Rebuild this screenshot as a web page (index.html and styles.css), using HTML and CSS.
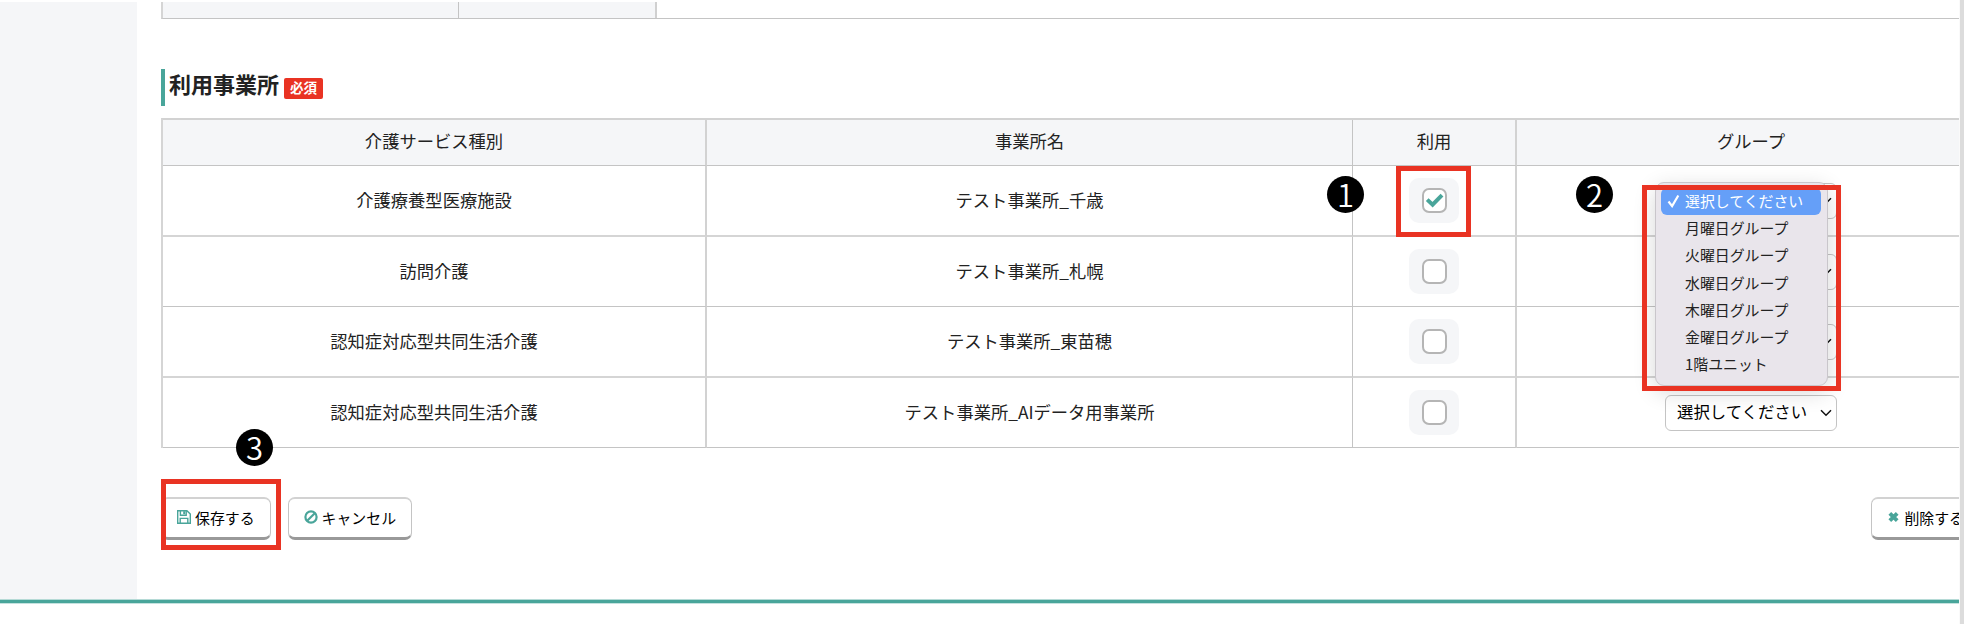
FILE: index.html
```html
<!DOCTYPE html>
<html lang="ja">
<head>
    <meta charset="UTF-8">
    <meta name="viewport" content="width=device-width, initial-scale=1.0">
    <title>利用事業所</title>
    <link rel="stylesheet" href="styles.css">
</head>
<body>

    <div class="page">
        <div class="layout">
            <div class="sidebar"></div>
            <div class="content">
                <div class="prev-table">
                    <div class="prev-head"></div>
                    <div class="prev-sub"></div>
                </div>

                <h2 class="title">利用事業所<span class="required">必須</span></h2>

                <table class="office-table">
                    <thead>
                        <tr>
                            <th class="col-type">介護サービス種別</th>
                            <th class="col-name">事業所名</th>
                            <th class="col-use">利用</th>
                            <th class="col-group">グループ</th>
                        </tr>
                    </thead>
                    <tbody>
                        <tr class="tall">
                            <td class="text">介護療養型医療施設</td>
                            <td class="text">テスト事業所_千歳</td>
                            <td>
                                <label class="check"><span class="box"><svg width="19" height="15" viewBox="0 0 19 15"><path d="M2.2 6.6l5.4 5L17 2.2" fill="none" stroke="#49a59a" stroke-width="4"/></svg></span></label>
                            </td>
                            <td>
                                <div class="select"><svg class="arrow" width="12" height="8" viewBox="0 0 12 8"><path d="M1 1.2l5 5 5-5"/></svg>
                                    <ul class="menu">
                                        <li class="active"><svg class="tick" width="13" height="14" viewBox="0 0 13 14"><path d="M1.5 7.5l3.6 4.6L11.3 1.5"/></svg>選択してください</li>
                                        <li>月曜日グループ</li>
                                        <li>火曜日グループ</li>
                                        <li>水曜日グループ</li>
                                        <li>木曜日グループ</li>
                                        <li>金曜日グループ</li>
                                        <li>1階ユニット</li>
                                    </ul>
                                </div>
                            </td>
                        </tr>
                        <tr>
                            <td class="text">訪問介護</td>
                            <td class="text">テスト事業所_札幌</td>
                            <td><label class="check"><span class="box"></span></label></td>
                            <td><div class="select"><svg class="arrow" width="12" height="8" viewBox="0 0 12 8"><path d="M1 1.2l5 5 5-5"/></svg></div></td>
                        </tr>
                        <tr class="tall">
                            <td class="text">認知症対応型共同生活介護</td>
                            <td class="text">テスト事業所_東苗穂</td>
                            <td><label class="check"><span class="box"></span></label></td>
                            <td><div class="select"><svg class="arrow" width="12" height="8" viewBox="0 0 12 8"><path d="M1 1.2l5 5 5-5"/></svg></div></td>
                        </tr>
                        <tr>
                            <td class="text">認知症対応型共同生活介護</td>
                            <td class="text">テスト事業所_AIデータ用事業所</td>
                            <td><label class="check"><span class="box"></span></label></td>
                            <td><div class="select">選択してください<svg class="arrow" width="12" height="8" viewBox="0 0 12 8"><path d="M1 1.2l5 5 5-5"/></svg></div></td>
                        </tr>
                    </tbody>
                </table>

                <div class="buttons">
                    <button class="btn">
                        <svg width="14" height="14" viewBox="0 0 14 14" fill="none" stroke="#49a59a" stroke-width="1.4"><path d="M.7.7h9.2l3.4 3.4v9.2H.7z"/><path d="M3.2 13V8.4h7.6V13"/><path d="M3.4.8v4.4h5.8V.8"/><path d="M7.2 1.2v3" stroke-width="2"/></svg>
                        保存する
                    </button>
                    <button class="btn">
                        <svg width="14" height="14" viewBox="0 0 14 14" fill="none" stroke="#49a59a" stroke-width="2.2"><circle cx="7" cy="7" r="5.6"/><path d="M3.2 10.8l7.6-7.6"/></svg>
                        キャンセル
                    </button>
                    <button class="btn btn-delete">
                        <svg width="11" height="12" viewBox="0 0 11 12"><path d="M1.8 2.3l7.4 7.4M9.2 2.3L1.8 9.7" stroke="#49a59a" stroke-width="3.8"/></svg>
                        削除する
                    </button>
                </div>
            </div>
        </div>
        <div class="footer-line"></div>
    </div>
    <div class="window-edge"></div>

    <!-- step markers -->
    <div class="frame frame-1"></div>
    <div class="frame frame-2"></div>
    <div class="frame frame-3"></div>
    <span class="step step-1">1</span>
    <span class="step step-2">2</span>
    <span class="step step-3">3</span>

</body>
</html>
```
FILE: styles.css
```css
* { margin: 0; padding: 0; box-sizing: border-box; }
body {
    position: relative;
    display: flex;
    width: 1964px;
    height: 624px;
    overflow: hidden;
    background-color: #fff;
    color: #222;
    font-family: 'Noto Sans CJK JP', sans-serif;
    font-size: 17.3px;
}
.page {
    width: 1959px;
    padding-top: 2px;
    overflow: hidden;
}
.layout { display: flex; height: 597px; }
.sidebar {
    flex: none;
    width: 137px;
    background-color: #f5f6f8;
}
.content { flex: none; width: 1849px; padding-left: 24px; }

/* bottom of the table above */
.prev-table {
    display: flex;
    height: 17px;
    border-left: 2px solid #d5d5d5;
    border-bottom: 1px solid #c4c4c4;
}
.prev-head { width: 296px; background-color: #f5f6f8; border-right: 1px solid #c4c4c4; }
.prev-sub { width: 198px; background-color: #f5f6f8; border-right: 2px solid #d0d0d0; }

.title {
    display: flex;
    align-items: flex-start;
    height: 37px;
    margin-top: 50px;
    padding: 0 0 0 4px;
    border-left: 4px solid #49a59a;
    font-size: 22px;
    line-height: 28px;
}
.required {
    height: 21px;
    margin: 9px 0 0 5px;
    padding: 0 6px;
    border-radius: 2px;
    background-color: #e93323;
    color: #fff;
    font-size: 13.5px;
    line-height: 19px;
}

.office-table {
    width: 1825px;
    margin-top: 12px;
    table-layout: fixed;
    border-collapse: separate;
    border-spacing: 0;
    border-top: 2px solid #d2d2d2;
    border-left: 2px solid #d5d5d5;
    text-align: center;
    line-height: 24px;
}
th {
    height: 46px;
    padding-bottom: 4px;
    background-color: #f5f6f8;
    font-weight: normal;
}
th, td { border-right: 1px solid #c4c4c4; border-bottom: 1px solid #c4c4c4; }
td { height: 70px; }
.text { padding-bottom: 2px; }
.tall td { height: 71px; border-bottom: 2px solid #d5d5d5; }
.col-type { width: 544px; }
.col-name { width: 646px; }
.col-use { width: 164px; }
th:first-child, td:first-child, th:nth-child(3), td:nth-child(3) { border-right: 2px solid #d2d2d2; }

.check {
    display: flex;
    align-items: center;
    justify-content: center;
    width: 50px;
    height: 45px;
    margin: 0 auto;
    border-radius: 10px;
    background-color: #f5f6f8;
}
.box {
    display: flex;
    align-items: center;
    justify-content: center;
    width: 25px;
    height: 25px;
    border: 2px solid #b5b5b5;
    border-radius: 7px;
    background-color: #fff;
}
.box svg { flex: none; }
.select {
    position: relative;
    display: flex;
    align-items: center;
    width: 172px;
    height: 36px;
    margin: 0 auto;
    padding: 0 4px 3px 11px;
    border: 1px solid #c4c4c4;
    border-radius: 6px;
    background-color: #fff;
    color: #000;
    font-size: 16.4px;
}
.arrow { margin: 3px 0 0 auto; fill: none; stroke: #111; stroke-width: 1.5; }
.menu {
    position: absolute;
    left: -11px;
    top: -2px;
    z-index: 1;
    width: 173px;
    height: 204px;
    padding: 5px 6px 6px 5px;
    border: 1px solid #c9c6cb;
    border-radius: 9px;
    background-color: #e9e5eb;
    box-shadow: 0 6px 22px rgba(0, 0, 0, 0.16);
    color: #222;
    font-size: 14.9px;
    text-align: left;
    list-style: none;
}
.menu li {
    display: flex;
    align-items: center;
    height: 27.2px;
    padding-left: 24px;
}
.menu .active {
    padding-left: 6px;
    border-radius: 6px;
    background-color: #659ff8;
    color: #fff;
}
.tick { margin-right: 5px; fill: none; stroke: #fff; stroke-width: 2.2; }

.buttons { display: flex; gap: 17px; width: 1820px; margin-top: 49px; }
.btn {
    display: flex;
    align-items: center;
    gap: 4px;
    height: 43px;
    padding: 0 15px 2px;
    border: 1px solid #c4c4c4;
    border-top: 2px solid #d2d2d2;
    border-bottom: 3px solid #999;
    border-radius: 7px;
    background-color: #fff;
    color: #000;
    font-family: inherit;
    font-size: 14.9px;
}
.btn-delete { margin-left: auto; gap: 5px; padding: 0 16px 2px; }

.footer-line {
    height: 5px;
    border-top: 1px solid #b5dad6;
    border-bottom: 1px solid #c5e2df;
    background-color: #49a59a;
}
.window-edge { width: 5px; border-left: 1px solid #fafafa; background-color: #dcdcdc; }

.frame { position: absolute; z-index: 2; border: 5px solid #e93323; }
.frame-1 { left: 1396px; top: 166px; width: 75px; height: 71px; }
.frame-2 { left: 1642px; top: 185px; width: 199px; height: 206px; }
.frame-3 { left: 161px; top: 479px; width: 120px; height: 71px; }
.step {
    position: absolute;
    z-index: 2;
    width: 37px;
    height: 37px;
    border-radius: 50%;
    background-color: #000;
    color: #fff;
    font-size: 31px;
    font-weight: 350;
    line-height: 35px;
    text-align: center;
}
.step-1 { left: 1327px; top: 176px; }
.step-2 { left: 1576px; top: 176px; }
.step-3 { left: 236px; top: 429px; }
```
